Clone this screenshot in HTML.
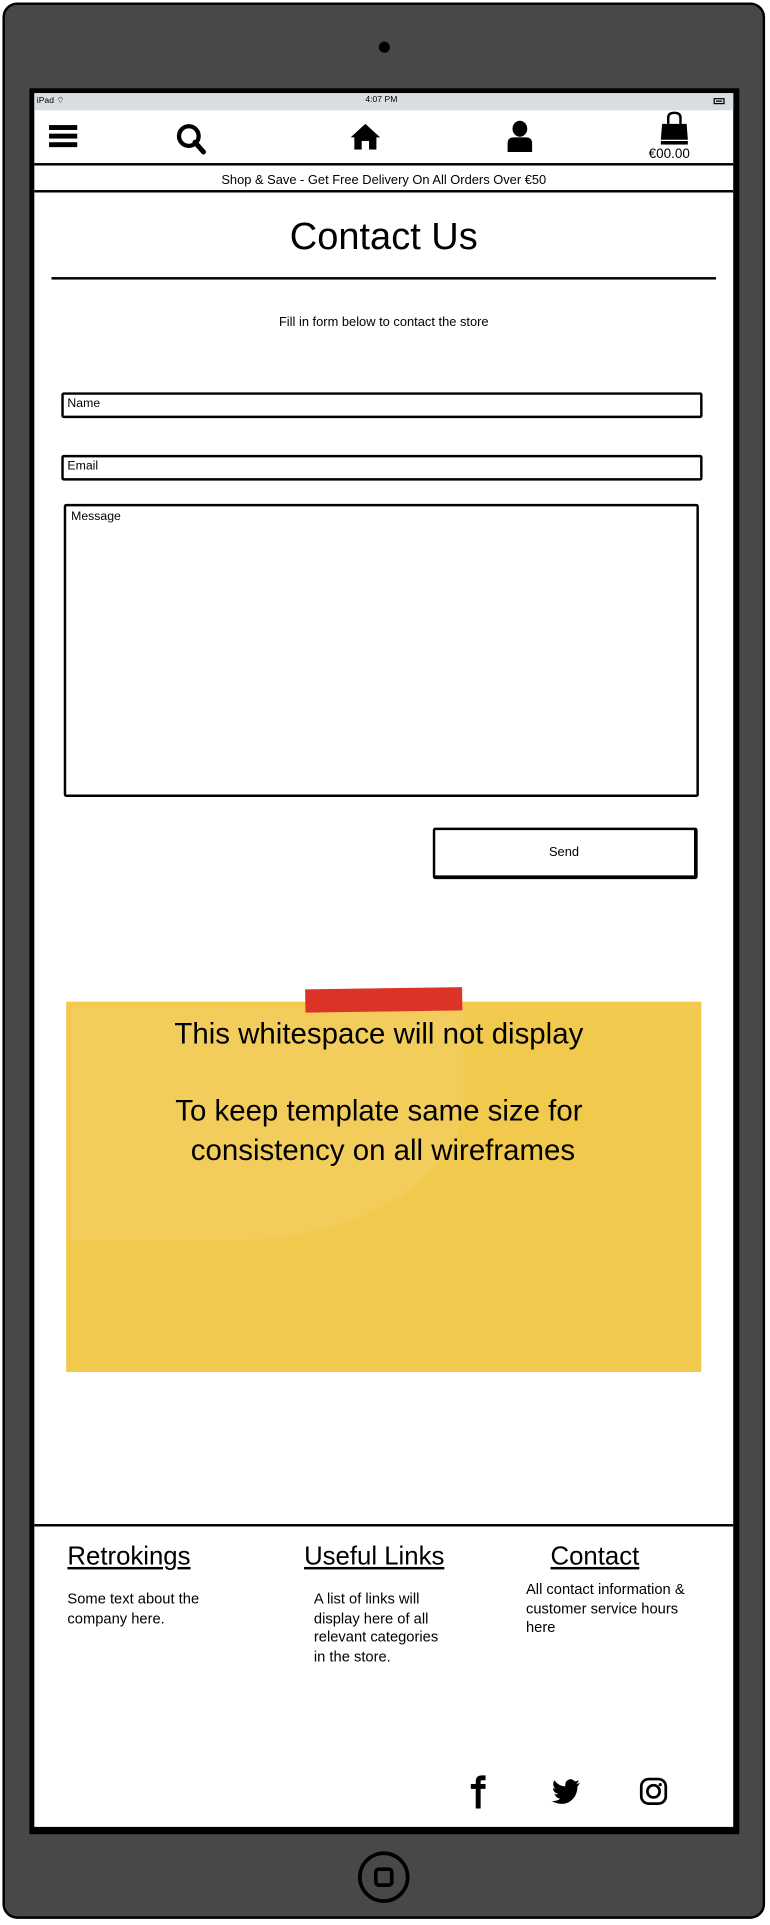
<!DOCTYPE html>
<html><head><meta charset="utf-8"><style>
html,body{margin:0;padding:0;background:#fff;width:770px;height:1925px;overflow:hidden}
#w{position:absolute;left:0;top:0;width:628px;height:1570px;transform:scale(1.2261);transform-origin:0 0;font-family:"Liberation Sans",sans-serif;color:#000}
.a{position:absolute}
.t{position:absolute;white-space:nowrap}
.box{position:absolute;border:2px solid #000;border-radius:2px;box-sizing:border-box}
</style></head><body><div id="w">
<div class="a" style="left:2px;top:2px;width:622px;height:1563px;background:#484848;border:2px solid #000;border-radius:12px;box-sizing:border-box"></div>
<div class="a" style="left:309px;top:34px;width:9px;height:9px;border-radius:50%;background:#000"></div>
<div class="a" style="left:24px;top:72px;width:579px;height:1424px;background:#000"></div>
<div class="a" style="left:28px;top:76px;width:570px;height:1414px;background:#fff"></div>
<div class="a" style="left:28px;top:76px;width:570px;height:14px;background:#d8dde0"></div>
<div class="t" style="left:30px;top:78px;font-size:7px">iPad ⌔</div>
<div class="t" style="left:298px;top:78px;font-size:7px">4:07 PM</div>
<div class="a" style="left:582px;top:80px;width:9px;height:5px;border:1px solid #000;box-sizing:border-box;background:linear-gradient(#000,#000) 1px 1px/5px 1px no-repeat"></div>
<div class="a" style="left:40px;top:102px;width:23px;height:4px;background:#000"></div>
<div class="a" style="left:40px;top:109px;width:23px;height:4px;background:#000"></div>
<div class="a" style="left:40px;top:116px;width:23px;height:4px;background:#000"></div>
<svg class="a" style="left:143px;top:100px" width="26" height="26" viewBox="0 0 26 26"><circle cx="11" cy="11" r="8" fill="none" stroke="#000" stroke-width="3.5"/><line x1="16" y1="16" x2="23" y2="24" stroke="#000" stroke-width="4" stroke-linecap="round"/></svg>
<svg class="a" style="left:285px;top:100px" width="26" height="22" viewBox="0 0 26 22"><path d="M13 1 L1 12 L4 12 L4 22 L10 22 L10 15 L16 15 L16 22 L22 22 L22 12 L25 12 Z" fill="#000"/></svg>
<svg class="a" style="left:413px;top:98px" width="22" height="26" viewBox="0 0 22 26"><ellipse cx="11" cy="7" rx="6" ry="6.5" fill="#000"/><path d="M1 26 L1 19 Q1 14 6 14 L16 14 Q21 14 21 19 L21 26 Z" fill="#000"/></svg>
<svg class="a" style="left:536px;top:90px" width="28" height="28" viewBox="0 0 28 28"><path d="M9 11 V6 Q9 2 14 2 Q19 2 19 6 V11" fill="none" stroke="#000" stroke-width="2"/><path d="M4 11 L24 11 L25 24 L3 24 Z" fill="#000"/><rect x="3" y="25" width="22" height="3" fill="#000"/></svg>
<div class="t" style="left:529px;top:120px;font-size:11px">€00.00</div>
<div class="a" style="left:28px;top:133px;width:570px;height:2px;background:#000"></div>
<div class="t" style="left:28px;width:570px;top:141px;font-size:10.5px;text-align:center">Shop &amp; Save - Get Free Delivery On All Orders Over €50</div>
<div class="a" style="left:28px;top:155px;width:570px;height:2px;background:#000"></div>
<div class="t" style="left:28px;width:570px;top:175px;font-size:31px;text-align:center">Contact Us</div>
<div class="a" style="left:42px;top:226px;width:542px;height:2px;background:#000"></div>
<div class="t" style="left:28px;width:570px;top:257px;font-size:10.5px;text-align:center">Fill in form below to contact the store</div>
<div class="box" style="left:50px;top:320px;width:523px;height:21px"></div>
<div class="t" style="left:55px;top:324px;font-size:10px">Name</div>
<div class="box" style="left:50px;top:371px;width:523px;height:21px"></div>
<div class="t" style="left:55px;top:375px;font-size:10px">Email</div>
<div class="box" style="left:52px;top:411px;width:518px;height:239px"></div>
<div class="t" style="left:58px;top:416px;font-size:10px">Message</div>
<div class="box" style="left:353px;top:675px;width:216px;height:42px;border-right-width:3px;border-bottom-width:3px"></div>
<div class="t" style="left:353px;width:214px;top:689px;font-size:10.5px;text-align:center">Send</div>
<div class="a" style="left:54px;top:817px;width:518px;height:302px;background:#f1c94c"></div>
<div class="a" style="left:58px;top:822px;width:320px;height:190px;background:#f3d26c;border-radius:0 0 60% 0;opacity:.5"></div>
<div class="a" style="left:249px;top:806px;width:128px;height:19px;background:#dc3329;transform:rotate(-0.8deg)"></div>
<div class="t" style="left:54px;width:510px;top:828px;font-size:24px;text-align:center;line-height:31.5px">This whitespace will not display<br><br>To keep template same size for<br>&nbsp;consistency on all wireframes</div>
<div class="a" style="left:28px;top:1243px;width:570px;height:2px;background:#000"></div>
<div class="t" style="left:55px;top:1258px;font-size:21px;text-decoration:underline">Retrokings</div>
<div class="t" style="left:248px;top:1258px;font-size:21px;text-decoration:underline">Useful Links</div>
<div class="t" style="left:449px;top:1258px;font-size:21px;text-decoration:underline">Contact</div>
<div class="t" style="left:55px;top:1297px;font-size:12px;line-height:15.5px">Some text about the<br>company here.</div>
<div class="t" style="left:256px;top:1297px;font-size:12px;line-height:15.5px">A list of links will<br>display here of all<br>relevant categories<br>in the store.</div>
<div class="t" style="left:429px;top:1289px;font-size:12px;line-height:15.5px">All contact information &amp;<br>customer service hours<br>here</div>
<svg class="a" style="left:382px;top:1447px" width="16" height="28" viewBox="0 0 16 28"><path d="M6 28 V12 H2 V8 H6 V6 Q6 1 11 1 H14 V5 H11 Q10 5 10 6 V8 H14 V12 H10 V28 Z" fill="#000"/></svg>
<svg class="a" style="left:450px;top:1450px" width="24" height="22" viewBox="0 0 24 20"><path d="M23 3 Q21 4 20 4 Q22 2 22 1 Q20 2 19 2 Q17 0 15 0 Q11 1 11 5 V6 Q6 6 2 1 Q0 5 3 8 Q2 8 1 7 Q1 11 5 12 Q4 13 2 12 Q4 16 7 16 Q4 18 0 18 Q12 24 19 14 Q21 10 21 6 Q22 5 23 3Z" fill="#000"/></svg>
<svg class="a" style="left:521px;top:1449px" width="24" height="24" viewBox="0 0 24 24"><rect x="2" y="2" width="20" height="20" rx="6" fill="none" stroke="#000" stroke-width="2.2"/><circle cx="12" cy="12" r="5" fill="none" stroke="#000" stroke-width="2.2"/><circle cx="17.5" cy="6.5" r="1.3" fill="#000"/></svg>
<div class="a" style="left:292px;top:1510px;width:42px;height:42px;border:3px solid #000;border-radius:50%;box-sizing:border-box"></div>
<div class="a" style="left:305px;top:1523px;width:16px;height:16px;border:3px solid #000;border-radius:4px;box-sizing:border-box"></div>
</div></body></html>
